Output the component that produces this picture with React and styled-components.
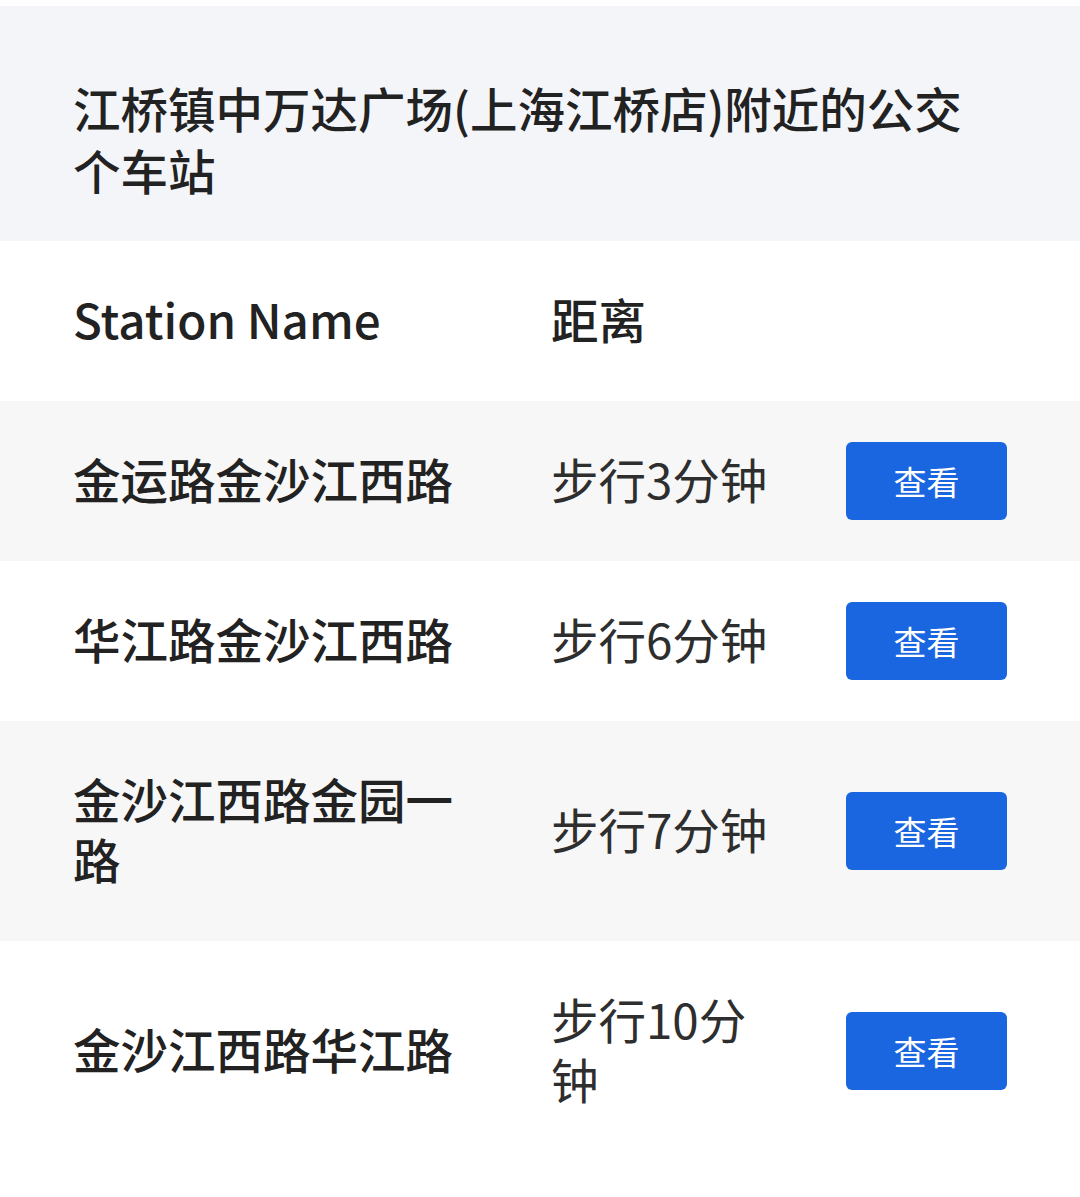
import React from "react";
import styled, { createGlobalStyle } from "styled-components";

const Global = createGlobalStyle`
  html, body { margin: 0; padding: 0; background: #ffffff; }
  body { font-family: "Noto Sans CJK SC", "Noto Sans", sans-serif; color: #222222; }
`;

const Page = styled.div`
  width: 1080px;
  padding-top: 6px;
  background: #ffffff;
`;

const Header = styled.header`
  background: #f3f5f8;
  padding: 71px 73px 40px 73px;
`;

const Title = styled.h1`
  margin: 0;
  font-size: 47.5px;
  line-height: 62px;
  font-weight: 500;
  color: #222222;
  max-width: 930px;
`;

const Table = styled.div`
  display: flex;
  flex-direction: column;
`;

const Row = styled.div`
  display: grid;
  grid-template-columns: 478px 295px 161px;
  align-items: center;
  padding: 0 0 0 73px;
  background: ${(p) => (p.$shade ? "#f7f7f7" : "#ffffff")};
`;

const NameCell = styled.div`
  padding: 48px 60px 52px 0;
  font-size: 47.5px;
  line-height: 60px;
  font-weight: 500;
  color: #222222;
`;

const DistCell = styled.div`
  padding: 48px 58px 52px 0;
  font-size: 47.5px;
  line-height: 60px;
  font-weight: ${(p) => (p.$head ? 500 : 400)};
  color: ${(p) => (p.$head ? "#222222" : "#2e2e2e")};
`;

const ViewButton = styled.button`
  width: 161px;
  height: 78px;
  border: none;
  border-radius: 6px;
  background: #1a66e0;
  color: #ffffff;
  font-family: "Noto Sans CJK SC", sans-serif;
  font-size: 33px;
  font-weight: 400;
  padding: 0;
  cursor: pointer;
`;

const stations = [
  { name: "金运路金沙江西路", dist: "步行3分钟" },
  { name: "华江路金沙江西路", dist: "步行6分钟" },
  { name: "金沙江西路金园一路", dist: "步行7分钟" },
  { name: "金沙江西路华江路", dist: "步行10分钟" },
];

export default function App() {
  return (
    <Page>
      <Global />
      <Header>
        <Title>江桥镇中万达广场(上海江桥店)附近的公交个车站</Title>
      </Header>
      <Table>
        <Row>
          <NameCell>Station Name</NameCell>
          <DistCell $head>距离</DistCell>
          <div />
        </Row>
        {stations.map((s, i) => (
          <Row key={s.name} $shade={i % 2 === 0}>
            <NameCell>{s.name}</NameCell>
            <DistCell>{s.dist}</DistCell>
            <ViewButton>查看</ViewButton>
          </Row>
        ))}
      </Table>
    </Page>
  );
}
